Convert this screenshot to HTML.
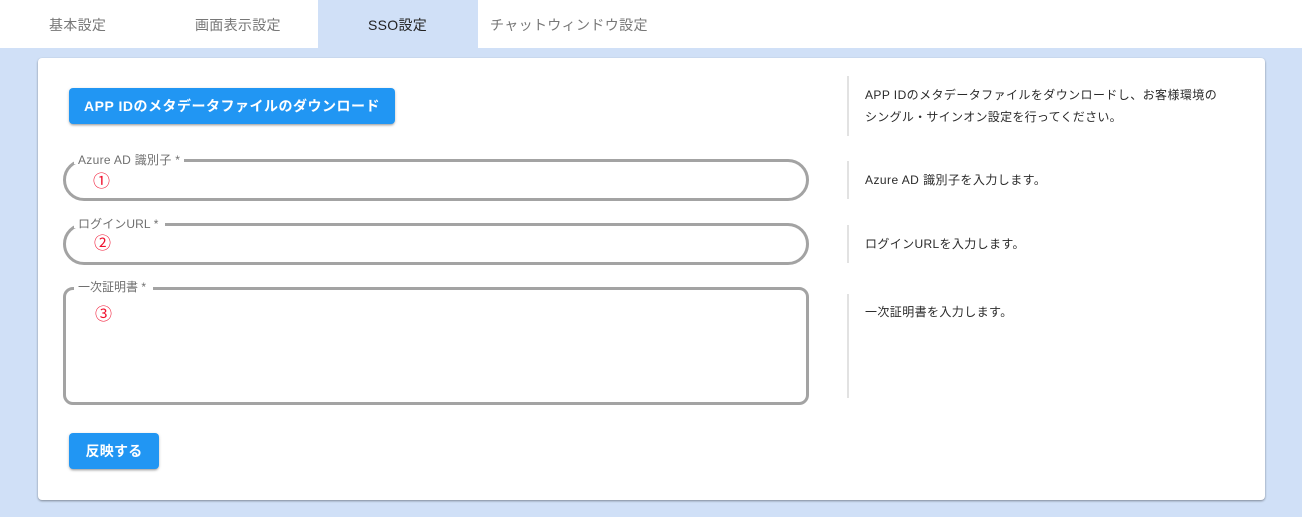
<!DOCTYPE html>
<html lang="ja">
<head>
<meta charset="utf-8">
<title>SSO設定</title>
<style>
html,body{margin:0;padding:0}
body{width:1302px;height:517px;position:relative;overflow:hidden;background:#d0e0f7;font-family:"Liberation Sans","Noto Sans CJK JP",sans-serif}
div,span{position:absolute;box-sizing:border-box;white-space:nowrap}
.top{left:0;top:0;width:1302px;height:48px;background:#fff}
.tab{top:15px;font-size:14px;line-height:20px;color:#777;letter-spacing:.3px}
.active{left:318px;top:0;width:160px;height:48px;background:#d0e0f7}
.card{left:38px;top:58px;width:1227px;height:442px;background:#fff;border-radius:4px;box-shadow:0 1px 2px rgba(0,0,0,.4)}
.btn{background:#2196f3;color:#fff;border-radius:4px;font-weight:bold;font-size:14px;box-shadow:0 2px 2px -1px rgba(0,0,0,.3),0 1px 3px rgba(0,0,0,.18);text-align:center}
.field{left:63px;width:746px;border:3px solid #a3a3a3;background:#fff}
.gap{background:#fff;height:7px}
.label{left:78px;font-size:12px;line-height:14px;color:#6f6f6f}
.num{color:#f0102e;font-size:17px;line-height:20px}
.rule{left:847px;width:2px;background:#e2e2e2}
.help{left:865px;font-size:12px;line-height:20px;color:#2a2a2a}
</style>
</head>
<body>
<div class="top"></div>
<div class="active"></div>
<div class="tab" style="left:49px">基本設定</div>
<div class="tab" style="left:195px">画面表示設定</div>
<div class="tab" style="left:368px;color:#222">SSO設定</div>
<div class="tab" style="left:490px;letter-spacing:.36px">チャットウィンドウ設定</div>

<div class="card"></div>

<div class="btn" style="left:69px;top:88px;width:326px;height:36px;line-height:36px;letter-spacing:.5px">APP IDのメタデータファイルのダウンロード</div>

<div class="field" style="top:159px;height:42px;border-radius:21px"></div>
<div class="gap" style="left:74px;top:157px;width:110px"></div>
<div class="label" style="top:153px;letter-spacing:.3px">Azure AD 識別子 *</div>
<div class="num" style="left:93px;top:172px">①</div>

<div class="field" style="top:223px;height:42px;border-radius:21px"></div>
<div class="gap" style="left:74px;top:221px;width:91px"></div>
<div class="label" style="top:217px;letter-spacing:.1px">ログインURL *</div>
<div class="num" style="left:94px;top:234px">②</div>

<div class="field" style="top:287px;height:118px;border-radius:10px"></div>
<div class="gap" style="left:74px;top:285px;width:79px"></div>
<div class="label" style="top:280px">一次証明書 *</div>
<div class="num" style="left:95px;top:305px">③</div>

<div class="btn" style="left:69px;top:433px;width:90px;height:36px;line-height:36px;letter-spacing:.25px">反映する</div>

<div class="rule" style="top:76px;height:60px"></div>
<div class="help" style="top:85px;letter-spacing:.42px">APP IDのメタデータファイルをダウンロードし、お客様環境の</div>
<div class="help" style="top:107px;letter-spacing:.28px">シングル・サインオン設定を行ってください。</div>

<div class="rule" style="top:161px;height:38px"></div>
<div class="help" style="top:170px;letter-spacing:.45px">Azure AD 識別子を入力します。</div>

<div class="rule" style="top:225px;height:38px"></div>
<div class="help" style="top:234px;letter-spacing:.36px">ログインURLを入力します。</div>

<div class="rule" style="top:294px;height:104px"></div>
<div class="help" style="top:302px;letter-spacing:.4px">一次証明書を入力します。</div>
</body>
</html>
